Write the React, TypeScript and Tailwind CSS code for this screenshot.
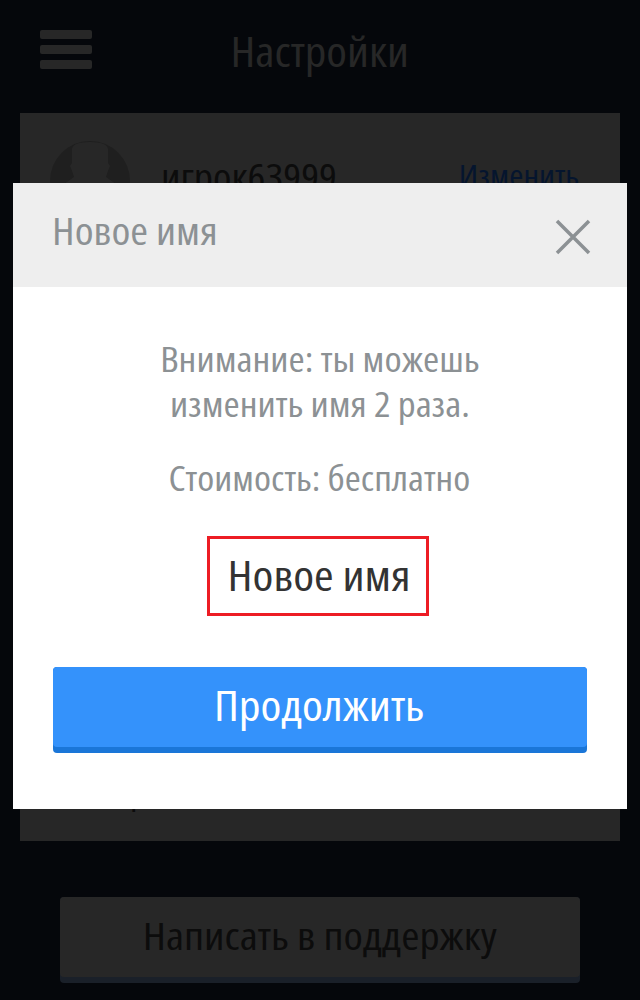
import React from "react";

const font = "font-['Open_Sans','Noto_Sans',sans-serif] font-stretch-condensed";

export default function App() {
  return (
    <div className={`relative w-[640px] h-[1000px] overflow-hidden bg-[#05070b] ${font}`}>
      <header className="h-[113px] relative flex items-start justify-center">
        <div className="absolute left-[40px] top-[30px] flex flex-col gap-[6px]">
          <div className="w-[52px] h-[9px] rounded-[2px] bg-[#272727]" />
          <div className="w-[52px] h-[9px] rounded-[2px] bg-[#272727]" />
          <div className="w-[52px] h-[9px] rounded-[2px] bg-[#272727]" />
        </div>
        <h1 className="mt-[24px] text-[42px] leading-[54px] text-[#272727] scale-x-[1.12]">Настройки</h1>
      </header>
      <section className="mx-[20px] h-[728px] bg-[#272727] pt-[28px] px-[30px] flex flex-col">
        <div className="flex items-start">
          <svg width="80" height="80" viewBox="0 0 80 80" className="shrink-0">
            <circle cx="40" cy="40" r="40" fill="#1f1f1f" />
            <path d="M22 8 Q23 1 40 1 Q57 1 58 8 L58 22 L60 25 L58 30 L56 36 L70 46 L70 80 L10 80 L10 46 L24 36 L22 30 L20 25 L22 22 Z" fill="#272727" />
          </svg>
          <div className="ml-[31px] mt-[10px] text-[38px] leading-[50px] text-[#0c0c0c] origin-left scale-x-[1.105]">игрок63999</div>
          <div className="ml-auto mr-[11px] mt-[16px] text-[30px] leading-[38px] text-[#05152e] origin-right scale-x-[1.145]">Изменить</div>
        </div>
        <div className="mt-auto mb-[31px] ml-[80px] text-[36px] leading-[40px] text-[#0c0c0c]">р</div>
      </section>
      <div className="mt-[56px] mx-[60px] h-[86px] rounded-[4px] bg-[#1a2029]">
        <div className="h-[80px] pb-[4px] rounded-[4px] bg-[#272727] flex items-center justify-center text-[39px] text-[#0c0c0c]">
          <span className="inline-block scale-x-[1.13]">Написать в поддержку</span>
        </div>
      </div>

      <div className="absolute left-[13px] top-[183px] w-[614px] h-[626px] bg-white">
        <div className="relative h-[104px] bg-[#eeeeee] pl-[39px] pt-[22px] text-[38px] leading-[50px] text-[#8c9194]">
          <span className="inline-block origin-left scale-x-[1.13]">Новое имя</span>
          <svg className="absolute left-[542px] top-[36px]" width="36" height="36" viewBox="0 0 36 36" fill="none" stroke="#8c9194" strokeWidth="3.5">
            <path d="M2 2 L34 34 M34 2 L2 34" />
          </svg>
        </div>
        <div className="flex flex-col items-center">
          <p className="mt-[50px] text-center text-[34px] leading-[45px] text-[#8c9194] scale-x-[1.15]">Внимание: ты можешь<br />изменить имя 2 раза.</p>
          <p className="mt-[28px] mr-[2px] text-[34px] leading-[46px] text-[#8c9194] scale-x-[1.14]">Стоимость: бесплатно</p>
          <div className="mt-[35px] mr-[4px] w-[222px] h-[80px] pb-[4px] pl-[2px] border-[3px] border-[#ed1c24] flex items-center justify-center text-[42px] text-[#333333]">
            <span className="inline-block scale-x-[1.13]">Новое имя</span>
          </div>
          <div className="mt-[51px] w-[534px] h-[86px] rounded-[4px] bg-[#1a76d8]">
            <div className="h-[80px] pb-[6px] pr-[2px] rounded-[4px] bg-[#3492fb] flex items-center justify-center text-[42px] text-white">
              <span className="inline-block scale-x-[1.13]">Продолжить</span>
            </div>
          </div>
        </div>
      </div>
    </div>
  );
}
